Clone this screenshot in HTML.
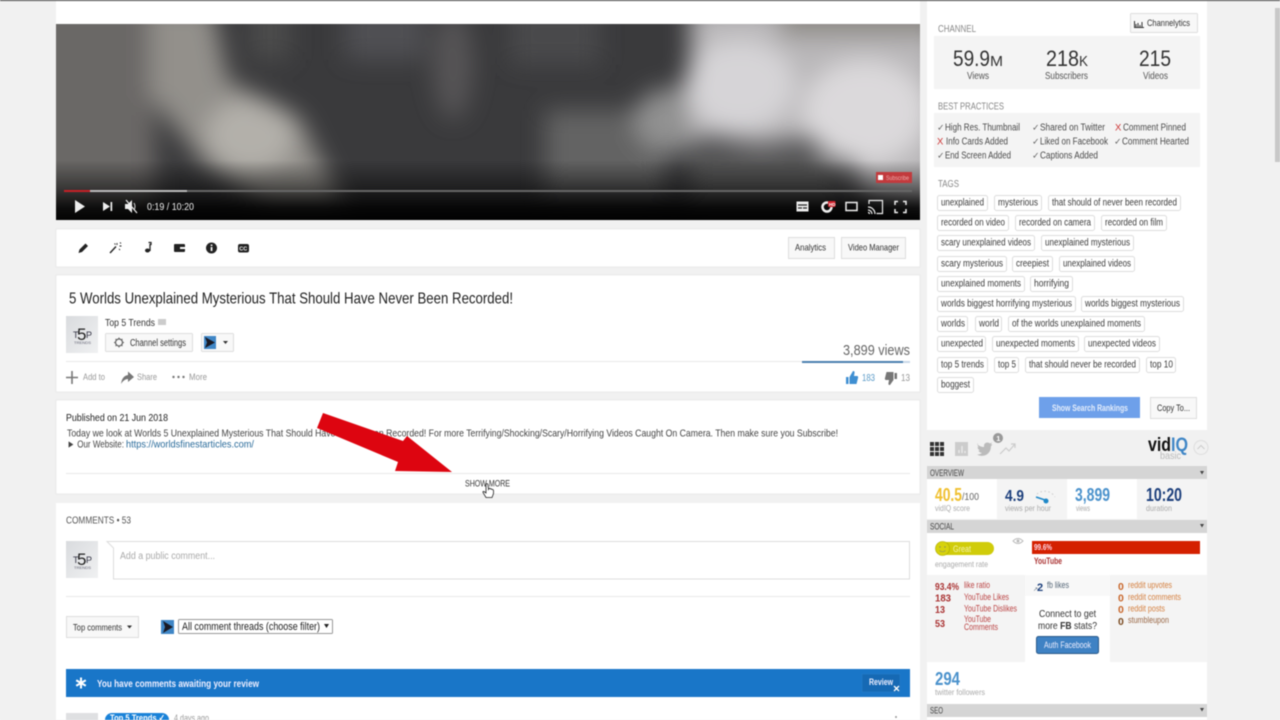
<!DOCTYPE html>
<html><head><meta charset="utf-8"><title>Video</title>
<style>
html,body{margin:0;padding:0;width:1280px;height:720px;overflow:hidden;background:#f1f1f1}
svg{display:block;font-family:"Liberation Sans",sans-serif;filter:blur(.4px)}
.g{fill:#888;font-size:10px}
.tag rect{fill:#fff;stroke:#ddd}
.tag text{font-size:10px;fill:#3c3c3c;transform:translateY(-.6px)}
.bp{font-size:10px;fill:#4a4a4a}
.ck{font-size:9px;fill:#666}
.x{font-size:9.500px;fill:#c33}
.lab{font-size:8.500px;fill:#aaa}
.hd{font-size:9px;fill:#444}
.r{font-size:9px;fill:#b44}
.rn{font-size:10.500px;fill:#a33;font-weight:bold}
.o{font-size:9px;fill:#d58040}
.on{font-size:10.500px;fill:#c8662a;font-weight:bold}
.btn{fill:#f8f8f8;stroke:#ddd}
</style></head><body>
<svg width="1280" height="720" viewBox="0 0 1280 720" xmlns="http://www.w3.org/2000/svg">
<defs>
<clipPath id="vc"><rect x="56" y="24" width="864" height="196"/></clipPath>
<filter id="bl" x="-30%" y="-30%" width="160%" height="160%"><feGaussianBlur stdDeviation="12"/></filter>
<linearGradient id="vg" x1="0" y1="0" x2="0" y2="1"><stop offset="0" stop-color="#000" stop-opacity="0"/><stop offset=".5" stop-color="#000" stop-opacity=".5"/><stop offset=".8" stop-color="#000" stop-opacity=".88"/><stop offset="1" stop-color="#000" stop-opacity=".97"/></linearGradient>
<linearGradient id="av" x1="0" y1="0" x2="1" y2="1"><stop offset="0" stop-color="#d9dbde"/><stop offset="1" stop-color="#f0f1f2"/></linearGradient>
</defs>
<rect width="1280" height="720" fill="#f1f1f1"/>
<rect width="1280" height="1" fill="#444"/>
<rect x="1275" y="8" width="5" height="154" fill="#c8c8c8"/>

<!-- left panels -->
<rect x="56" y="1" width="864" height="23" fill="#fff"/>
<rect x="56" y="229" width="864" height="38" fill="#fff" stroke="#e2e2e2" stroke-width=".6"/>
<rect x="56" y="275" width="864" height="117" fill="#fff" stroke="#e2e2e2" stroke-width=".6"/>
<rect x="56" y="400" width="864" height="94" fill="#fff" stroke="#e2e2e2" stroke-width=".6"/>
<rect x="56" y="503" width="864" height="217" fill="#fff"/>

<!-- video -->
<g clip-path="url(#vc)">
<rect x="56" y="24" width="864" height="196" fill="#3a3a3c"/>
<g filter="url(#bl)">
<rect x="20" y="0" width="135" height="230" fill="#6a6866"/>
<polygon points="150,5 212,5 228,80 300,118 345,210 270,210 205,165 150,95" fill="#93908b"/>
<ellipse cx="250" cy="135" rx="44" ry="36" fill="#b3b0aa"/>
<rect x="250" y="5" width="40" height="55" fill="#4b4b4c"/>
<rect x="345" y="5" width="80" height="55" fill="#505052"/>
<ellipse cx="453" cy="65" rx="20" ry="55" fill="#565557"/>
<rect x="510" y="5" width="90" height="60" fill="#4a4a4b"/>
<rect x="545" y="110" width="120" height="90" fill="#636363"/>
<ellipse cx="672" cy="120" rx="38" ry="32" fill="#919191"/>
<polygon points="690,5 940,5 945,215 862,200 845,135 760,145 690,135" fill="#b9b7b9"/>
<rect x="780" y="0" width="160" height="36" fill="#8d8a85"/>
<ellipse cx="740" cy="85" rx="55" ry="45" fill="#d6d4d7"/>
<ellipse cx="865" cy="112" rx="62" ry="52" fill="#dbd9db"/>
<rect x="690" y="155" width="150" height="60" fill="#5a5a5a"/>
</g>
<rect x="56" y="160" width="864" height="60" fill="url(#vg)"/>
</g>
<rect x="64" y="190" width="848" height="2" fill="#666"/>
<rect x="64" y="190" width="123" height="2" fill="#bbb"/>
<rect x="64" y="190" width="26" height="2" fill="#c62026"/>
<path d="M75 200 L85 206.500 L75 213Z" fill="#eee"/>
<path d="M103 202 L110 206.500 L103 211Z M110.500 202 h1.700 v9 h-1.700Z" fill="#eee"/>
<path d="M125 204 h3 l4 -4 v13 l-4 -4 h-3Z" fill="#eee"/>
<path d="M126 200 L137 213" stroke="#eee" stroke-width="1.200"/>
<path d="M134 203 q2 3.500 0 7" stroke="#ddd" fill="none"/>
<text x="147" y="210" font-size="10.500" fill="#eee" textLength="47" lengthAdjust="spacingAndGlyphs">0:19 / 10:20</text>
<rect x="876" y="172" width="36" height="11" fill="#c23a3d"/>
<rect x="878" y="175" width="5" height="5" fill="#fff"/>
<text x="886" y="180" font-size="6" fill="#eaa" textLength="23" lengthAdjust="spacingAndGlyphs">Subscribe</text>
<rect x="796.500" y="201.500" width="12" height="10" fill="#eee"/>
<path d="M798 205 h9 M798 208 h4 M803 208 h4" stroke="#222" stroke-width="1.300"/>
<circle cx="827" cy="207" r="4.500" fill="none" stroke="#eee" stroke-width="2.500"/>
<rect x="828" y="201" width="7.500" height="6" rx="1" fill="#d0202a"/>
<text x="829" y="206" font-size="4.500" fill="#fff" font-weight="bold">HD</text>
<rect x="846" y="202.500" width="11" height="8" fill="none" stroke="#eee" stroke-width="1.500"/>
<path d="M869 204 v-3.500 h13.500 v13 h-6" fill="none" stroke="#eee" stroke-width="1.200"/>
<path d="M868 207 a7 7 0 0 1 7 7 M868 210 a4 4 0 0 1 4 4 M868 212.500 a1.500 1.500 0 0 1 1.500 1.500" fill="none" stroke="#eee" stroke-width="1.200"/>
<path d="M895 205 v-3.500 h3 M903 201.500 h3 v3.500 M906 209 v3.500 h-3 M898 212.500 h-3 v-3.500" fill="none" stroke="#eee" stroke-width="1.500"/>

<!-- toolbar -->
<path d="M78.500 253 L79.500 249.500 L85.500 243.500 L88 246 L82 252Z" fill="#222"/>
<path d="M110 253 L116 246.500" stroke="#222" stroke-width="1.400"/>
<path d="M117 243 v2 M119.500 246 h2 M114.500 243.500 l1 1 M119 249 l1 1 M120 242.500 l1 1" stroke="#222" stroke-width=".9"/>
<path d="M148.500 242.500 h2.500 v2 h-1 v6.500" fill="none" stroke="#222" stroke-width="1.300"/>
<ellipse cx="147.500" cy="250.500" rx="2.500" ry="2" fill="#222"/>
<rect x="174" y="244" width="11" height="8" rx="1" fill="#222"/>
<rect x="180" y="247" width="5" height="2" fill="#fff"/>
<circle cx="211.500" cy="248" r="5.500" fill="#222"/>
<rect x="210.700" y="247" width="1.700" height="4" fill="#fff"/><rect x="210.700" y="244.500" width="1.700" height="1.500" fill="#fff"/>
<rect x="238" y="244" width="11" height="8.500" rx="2" fill="#222"/>
<text x="239.300" y="250.700" font-size="5.500" font-weight="bold" fill="#fff">CC</text>
<rect class="btn" x="788.500" y="237.500" width="46" height="21"/>
<text x="795" y="250.500" font-size="9.500" fill="#333" textLength="31" lengthAdjust="spacingAndGlyphs">Analytics</text>
<rect class="btn" x="841.500" y="237.500" width="64" height="21"/>
<text x="848" y="250.500" font-size="9.500" fill="#333" textLength="51" lengthAdjust="spacingAndGlyphs">Video Manager</text>

<!-- title block -->
<text x="69" y="303.500" font-size="16px" fill="#222" textLength="444" lengthAdjust="spacingAndGlyphs">5 Worlds Unexplained Mysterious That Should Have Never Been Recorded!</text>
<rect x="66" y="316" width="32" height="37" fill="url(#av)"/>
<text x="73" y="338" font-size="9" fill="#334">T</text><text x="77" y="340" font-size="17" fill="#222">5</text><text x="86" y="338" font-size="9" fill="#334">P</text>
<text x="74" y="344" font-size="4" fill="#667" textLength="17" lengthAdjust="spacingAndGlyphs">TRENDS</text>
<text x="105" y="326" font-size="10.500" fill="#333" textLength="50" lengthAdjust="spacingAndGlyphs">Top 5 Trends</text>
<rect x="158" y="319" width="8" height="6" fill="#ccc"/>
<rect class="btn" x="105.500" y="333.500" width="87" height="18" rx="1"/>
<circle cx="119" cy="342.500" r="3.500" fill="none" stroke="#666" stroke-width="1.300"/>
<path d="M119 337.500 v2 M119 345.500 v2 M114 342.500 h2 M122 342.500 h2 M115.500 339 l1.200 1.200 M121.300 344.800 l1.200 1.200 M122.500 339 l-1.200 1.200 M116.700 344.800 l-1.200 1.200" stroke="#666"/>
<text x="130" y="346" font-size="10" fill="#333" textLength="56" lengthAdjust="spacingAndGlyphs">Channel settings</text>
<rect class="btn" x="201.500" y="333.500" width="32" height="18" rx="1"/>
<rect x="204" y="336" width="12" height="13" fill="#3f86c6"/>
<path d="M205 337 L215 342.500 L205 348 L207 342.500Z" fill="#1a1a24"/>
<path d="M223 341 h5 l-2.500 3Z" fill="#333"/>
<rect x="66" y="361" width="844" height="1" fill="#e8e8e8"/>
<path d="M72 371 v13 M66 377.500 h12" stroke="#777" stroke-width="1.600"/>
<text x="83" y="380" font-size="9" fill="#999" textLength="22" lengthAdjust="spacingAndGlyphs">Add to</text>
<path d="M121 384 Q122 376 128 375 V371.500 L134 377 L128 382 V379 Q124 379 121 384Z" fill="#777"/>
<text x="137" y="380" font-size="9" fill="#999" textLength="20" lengthAdjust="spacingAndGlyphs">Share</text>
<circle cx="173.500" cy="377" r="1.200" fill="#777"/><circle cx="178.500" cy="377" r="1.200" fill="#777"/><circle cx="183.500" cy="377" r="1.200" fill="#777"/>
<text x="189" y="380" font-size="9" fill="#999" textLength="18" lengthAdjust="spacingAndGlyphs">More</text>
<text x="843" y="355" font-size="15px" fill="#666" textLength="67" lengthAdjust="spacingAndGlyphs">3,899 views</text>
<rect x="802" y="361" width="101" height="2" fill="#4a7fb0"/>
<rect x="903" y="361" width="7" height="2" fill="#c8d8e8"/>
<path d="M846 377 h2.500 v7 h-2.500Z M849.500 377 L853 371 q2 0 1.500 2 L854 376 h3.500 q1 1 .5 2 L856.500 384 h-7Z" fill="#3f8fd2"/>
<text x="862" y="381" font-size="10" fill="#5b9bc8" textLength="13" lengthAdjust="spacingAndGlyphs">183</text>
<path d="M894.500 373 h2.500 v6 h-2.500Z M893.500 380 L890 385 q-2 0 -1.500 -2 L889 380 h-3.500 q-1 -1 -.5 -2 L886.500 372 h7Z" fill="#777"/>
<text x="901" y="381" font-size="10" fill="#999" textLength="9" lengthAdjust="spacingAndGlyphs">13</text>

<!-- description -->
<text x="66" y="421" font-size="10.500" fill="#222" textLength="102" lengthAdjust="spacingAndGlyphs">Published on 21 Jun 2018</text>
<text x="67" y="436.500" font-size="10.500" fill="#444" textLength="771" lengthAdjust="spacingAndGlyphs">Today we look at Worlds 5 Unexplained Mysterious That Should Have Never Been Recorded! For more Terrifying/Shocking/Scary/Horrifying Videos Caught On Camera. Then make sure you Subscribe!</text>
<text x="67" y="447.500" font-size="10.500" fill="#444" textLength="57" lengthAdjust="spacingAndGlyphs">► Our Website:</text>
<text x="126" y="447.500" font-size="10.500" fill="#2b6c9b" textLength="128" lengthAdjust="spacingAndGlyphs">https://worldsfinestarticles.com/</text>
<rect x="66" y="473" width="844" height="1" fill="#e8e8e8"/>
<text x="465" y="486.500" font-size="9.500" fill="#333" textLength="45" lengthAdjust="spacingAndGlyphs">SHOW MORE</text>

<!-- comments -->
<text x="66" y="523.500" font-size="10" fill="#555" textLength="65" lengthAdjust="spacingAndGlyphs">COMMENTS • 53</text>
<rect x="66" y="541" width="32" height="37" fill="url(#av)"/>
<text x="73" y="563" font-size="9" fill="#334">T</text><text x="77" y="565" font-size="17" fill="#222">5</text><text x="86" y="563" font-size="9" fill="#334">P</text>
<text x="74" y="569" font-size="4" fill="#667" textLength="17" lengthAdjust="spacingAndGlyphs">TRENDS</text>
<path d="M107 541.500 H909.500 V579 H113.500 V548Z" fill="#fff" stroke="#ddd"/>
<text x="120" y="559" font-size="10" fill="#aaa" textLength="95" lengthAdjust="spacingAndGlyphs">Add a public comment...</text>
<rect x="66" y="596" width="844" height="1" fill="#e8e8e8"/>
<rect class="btn" x="66.500" y="616.500" width="72" height="21"/>
<text x="73" y="630.500" font-size="9.500" fill="#333" textLength="49" lengthAdjust="spacingAndGlyphs">Top comments</text>
<path d="M127 625.500 h5 l-2.500 3Z" fill="#333"/>
<rect x="161" y="620" width="13" height="14" fill="#3f86c6"/>
<path d="M163 621 L173 627 L163 633 L165 627Z" fill="#1a1a24"/>
<rect x="178.500" y="619.500" width="154" height="14" rx="1" fill="#fff" stroke="#999"/>
<text x="182" y="630" font-size="11" fill="#222" textLength="138" lengthAdjust="spacingAndGlyphs">All comment threads (choose filter)</text>
<path d="M324 624 h5 l-2.500 4Z" fill="#222"/>
<rect x="66" y="669" width="844" height="28" fill="#1976c8"/>
<path d="M81 677.500 v11 M76.200 680.200 L85.800 685.800 M85.800 680.200 L76.200 685.800" stroke="#fff" stroke-width="2"/>
<text x="97" y="687" font-size="10" font-weight="bold" fill="#eef" textLength="162" lengthAdjust="spacingAndGlyphs">You have comments awaiting your review</text>
<rect x="862" y="674" width="38" height="18" fill="#1669b4" stroke="#2a7fca" stroke-width=".5"/>
<text x="869" y="685" font-size="9.500" font-weight="bold" fill="#eef" textLength="24" lengthAdjust="spacingAndGlyphs">Review</text>
<path d="M894 686 L899 691 M899 686 L894 691" stroke="#fff" stroke-width="1.300"/>
<rect x="66" y="713" width="32" height="7" fill="#dfe0e2"/>
<rect x="105" y="713" width="64" height="14" rx="7" fill="#1a82d8"/>
<text x="110" y="721" font-size="9.500" fill="#fff" font-weight="bold" textLength="55" lengthAdjust="spacingAndGlyphs">Top 5 Trends ✓</text>
<text x="174" y="721" font-size="9.500" fill="#999" textLength="35" lengthAdjust="spacingAndGlyphs">4 days ago</text>
<circle cx="896" cy="717" r="1" fill="#999"/>

<!-- sidebar top -->
<rect x="927" y="1" width="280" height="429" fill="#fff"/>
<text x="938" y="32" class="g" textLength="38" lengthAdjust="spacingAndGlyphs">CHANNEL</text>
<rect class="btn" x="1130.500" y="13.500" width="67" height="19" rx="1"/>
<path d="M1134.500 21 v6.500 h9.500 M1136 27 v-3 M1138 27 v-4 M1140 27 v-2 M1142 27 v-5" stroke="#333" fill="none"/>
<text x="1147" y="26" font-size="9.500" fill="#333" textLength="43" lengthAdjust="spacingAndGlyphs">Channelytics</text>
<rect x="934" y="36" width="266" height="53" fill="#f4f4f4"/>
<text x="953" y="66" font-size="22px" fill="#333" textLength="37" lengthAdjust="spacingAndGlyphs">59.9</text>
<text x="990" y="66" font-size="15px" fill="#333" textLength="13" lengthAdjust="spacingAndGlyphs">M</text>
<text x="1046" y="66" font-size="22px" fill="#333" textLength="33" lengthAdjust="spacingAndGlyphs">218</text>
<text x="1079" y="66" font-size="15px" fill="#333" textLength="9" lengthAdjust="spacingAndGlyphs">K</text>
<text x="1139" y="66" font-size="22px" fill="#333" textLength="32" lengthAdjust="spacingAndGlyphs">215</text>
<text x="967" y="79" font-size="10" fill="#555" textLength="22" lengthAdjust="spacingAndGlyphs">Views</text>
<text x="1045" y="79" font-size="10" fill="#555" textLength="43" lengthAdjust="spacingAndGlyphs">Subscribers</text>
<text x="1143" y="79" font-size="10" fill="#555" textLength="25" lengthAdjust="spacingAndGlyphs">Videos</text>
<text x="938" y="109.500" class="g" textLength="66" lengthAdjust="spacingAndGlyphs">BEST PRACTICES</text>
<rect x="934" y="113" width="266" height="54" fill="#f4f4f4"/>
<text x="937" y="130.500" class="ck">✓</text><text x="945" y="130.500" class="bp" textLength="75" lengthAdjust="spacingAndGlyphs">High Res. Thumbnail</text>
<text x="1032" y="130.500" class="ck">✓</text><text x="1040" y="130.500" class="bp" textLength="65" lengthAdjust="spacingAndGlyphs">Shared on Twitter</text>
<text x="1115" y="130.500" class="x">X</text><text x="1123" y="130.500" class="bp" textLength="63" lengthAdjust="spacingAndGlyphs">Comment Pinned</text>
<text x="937" y="144.500" class="x">X</text><text x="946" y="144.500" class="bp" textLength="62" lengthAdjust="spacingAndGlyphs">Info Cards Added</text>
<text x="1032" y="144.500" class="ck">✓</text><text x="1040" y="144.500" class="bp" textLength="68" lengthAdjust="spacingAndGlyphs">Liked on Facebook</text>
<text x="1114" y="144.500" class="ck">✓</text><text x="1122" y="144.500" class="bp" textLength="67" lengthAdjust="spacingAndGlyphs">Comment Hearted</text>
<text x="937" y="158.500" class="ck">✓</text><text x="945" y="158.500" class="bp" textLength="66" lengthAdjust="spacingAndGlyphs">End Screen Added</text>
<text x="1032" y="158.500" class="ck">✓</text><text x="1040" y="158.500" class="bp" textLength="58" lengthAdjust="spacingAndGlyphs">Captions Added</text>
<text x="938" y="187" class="g" textLength="21" lengthAdjust="spacingAndGlyphs">TAGS</text>

<!-- tags -->
<g class="tag">
<rect x="937.500" y="195.500" width="50" height="15" rx="2"/><text x="941" y="206" textLength="43" lengthAdjust="spacingAndGlyphs">unexplained</text>
<rect x="994.500" y="195.500" width="47" height="15" rx="2"/><text x="998" y="206" textLength="40" lengthAdjust="spacingAndGlyphs">mysterious</text>
<rect x="1048.500" y="195.500" width="132" height="15" rx="2"/><text x="1052" y="206" textLength="125" lengthAdjust="spacingAndGlyphs">that should of never been recorded</text>
<rect x="937.500" y="215.500" width="71" height="15" rx="2"/><text x="941" y="226" textLength="64" lengthAdjust="spacingAndGlyphs">recorded on video</text>
<rect x="1015.500" y="215.500" width="79" height="15" rx="2"/><text x="1019" y="226" textLength="72" lengthAdjust="spacingAndGlyphs">recorded on camera</text>
<rect x="1101.500" y="215.500" width="65" height="15" rx="2"/><text x="1105" y="226" textLength="58" lengthAdjust="spacingAndGlyphs">recorded on film</text>
<rect x="937.500" y="235.500" width="97" height="15" rx="2"/><text x="941" y="246" textLength="90" lengthAdjust="spacingAndGlyphs">scary unexplained videos</text>
<rect x="1041.500" y="235.500" width="92" height="15" rx="2"/><text x="1045" y="246" textLength="85" lengthAdjust="spacingAndGlyphs">unexplained mysterious</text>
<rect x="937.500" y="256.500" width="69" height="15" rx="2"/><text x="941" y="267" textLength="62" lengthAdjust="spacingAndGlyphs">scary mysterious</text>
<rect x="1012.500" y="256.500" width="40" height="15" rx="2"/><text x="1016" y="267" textLength="33" lengthAdjust="spacingAndGlyphs">creepiest</text>
<rect x="1059.500" y="256.500" width="75" height="15" rx="2"/><text x="1063" y="267" textLength="68" lengthAdjust="spacingAndGlyphs">unexplained videos</text>
<rect x="937.500" y="276.500" width="87" height="15" rx="2"/><text x="941" y="287" textLength="80" lengthAdjust="spacingAndGlyphs">unexplained moments</text>
<rect x="1030.500" y="276.500" width="42" height="15" rx="2"/><text x="1034" y="287" textLength="35" lengthAdjust="spacingAndGlyphs">horrifying</text>
<rect x="937.500" y="296.500" width="138" height="15" rx="2"/><text x="941" y="307" textLength="131" lengthAdjust="spacingAndGlyphs">worlds biggest horrifying mysterious</text>
<rect x="1081.500" y="296.500" width="102" height="15" rx="2"/><text x="1085" y="307" textLength="95" lengthAdjust="spacingAndGlyphs">worlds biggest mysterious</text>
<rect x="937.500" y="316.500" width="30" height="15" rx="2"/><text x="941" y="327" textLength="24" lengthAdjust="spacingAndGlyphs">worlds</text>
<rect x="975.500" y="316.500" width="26" height="15" rx="2"/><text x="979" y="327" textLength="20" lengthAdjust="spacingAndGlyphs">world</text>
<rect x="1008.500" y="316.500" width="136" height="15" rx="2"/><text x="1012" y="327" textLength="129" lengthAdjust="spacingAndGlyphs">of the worlds unexplained moments</text>
<rect x="937.500" y="336.500" width="48" height="15" rx="2"/><text x="941" y="347" textLength="42" lengthAdjust="spacingAndGlyphs">unexpected</text>
<rect x="992.500" y="336.500" width="86" height="15" rx="2"/><text x="996" y="347" textLength="79" lengthAdjust="spacingAndGlyphs">unexpected moments</text>
<rect x="1084.500" y="336.500" width="75" height="15" rx="2"/><text x="1088" y="347" textLength="68" lengthAdjust="spacingAndGlyphs">unexpected videos</text>
<rect x="937.500" y="357.500" width="50" height="15" rx="2"/><text x="941" y="368" textLength="43" lengthAdjust="spacingAndGlyphs">top 5 trends</text>
<rect x="994.500" y="357.500" width="24" height="15" rx="2"/><text x="998" y="368" textLength="18" lengthAdjust="spacingAndGlyphs">top 5</text>
<rect x="1025.500" y="357.500" width="114" height="15" rx="2"/><text x="1029" y="368" textLength="107" lengthAdjust="spacingAndGlyphs">that should never be recorded</text>
<rect x="1146.500" y="357.500" width="29" height="15" rx="2"/><text x="1150" y="368" textLength="23" lengthAdjust="spacingAndGlyphs">top 10</text>
<rect x="937.500" y="377.500" width="36" height="15" rx="2"/><text x="941" y="388" textLength="29" lengthAdjust="spacingAndGlyphs">boggest</text>
</g>
<rect x="1039" y="397" width="101" height="21" fill="#6ea0ea"/>
<text x="1052" y="411" font-size="9" font-weight="bold" fill="#e4edfb" textLength="76" lengthAdjust="spacingAndGlyphs">Show Search Rankings</text>
<rect class="btn" x="1150.500" y="397.500" width="46" height="21"/>
<text x="1157" y="411" font-size="9.500" fill="#333" textLength="33" lengthAdjust="spacingAndGlyphs">Copy To...</text>

<!-- vidIQ header -->
<g fill="#333">
<rect x="930" y="442" width="4" height="4"/><rect x="935" y="442" width="4" height="4"/><rect x="940" y="442" width="4" height="4"/>
<rect x="930" y="447" width="4" height="4"/><rect x="935" y="447" width="4" height="4"/><rect x="940" y="447" width="4" height="4"/>
<rect x="930" y="452" width="4" height="4"/><rect x="935" y="452" width="4" height="4"/><rect x="940" y="452" width="4" height="4"/>
</g>
<rect x="955" y="442" width="13" height="14" fill="#ccc"/>
<path d="M959 453 v-3 M962 453 v-7 M965 453 v-2" stroke="#eee" stroke-width="1.200"/>
<path d="M977 444 q3 3 7 3 q-.5 -4 3 -4.500 q2 0 3 1 l2 -1 l-1 2 l1.500 0 l-1.500 1.500 q0 6 -5 9 q-5 2 -9 -.5 q3 0 5 -1.500 q-3 -.5 -3.500 -2.500 h1.500 q-2.500 -1.500 -2.500 -3.500 l1.500 .5 q-2 -1.500 -1 -4Z" fill="#bbb"/>
<circle cx="998" cy="438" r="5" fill="#999"/>
<text x="996.300" y="441" font-size="7.500" fill="#fff" font-weight="bold">1</text>
<path d="M1000 454 L1006 448 L1009 451 L1015 444 M1011 444 h4 v4" fill="none" stroke="#ccc" stroke-width="1.200"/>
<text x="1148" y="451" font-size="19px" font-weight="bold" fill="#111" textLength="23" lengthAdjust="spacingAndGlyphs">vid</text>
<text x="1171" y="451" font-size="19px" font-weight="bold" fill="#3f86c6" textLength="17" lengthAdjust="spacingAndGlyphs">IQ</text>
<text x="1160" y="459" font-size="10" fill="#bbb" textLength="21" lengthAdjust="spacingAndGlyphs">basic</text>
<circle cx="1201" cy="447.500" r="7" fill="none" stroke="#ddd"/>
<path d="M1197.500 449 L1201 445.500 L1204.500 449" fill="none" stroke="#ccc"/>

<!-- overview -->
<rect x="927" y="466" width="280" height="13" fill="#d5d5d5"/>
<text x="930" y="476" class="hd" textLength="34" lengthAdjust="spacingAndGlyphs">OVERVIEW</text>
<path d="M1200 471 h4 l-2 3.500Z" fill="#444"/>
<rect x="927" y="479" width="70" height="40" fill="#fff"/>
<rect x="997" y="479" width="70" height="40" fill="#f4f4f4"/>
<rect x="1067" y="479" width="70" height="40" fill="#fff"/>
<rect x="1137" y="479" width="70" height="40" fill="#f4f4f4"/>
<text x="935" y="501" font-size="18px" font-weight="bold" fill="#f0c030" textLength="27" lengthAdjust="spacingAndGlyphs">40.5</text>
<text x="962" y="500" font-size="10" fill="#666" textLength="17" lengthAdjust="spacingAndGlyphs">/100</text>
<text x="935" y="511" class="lab" textLength="35" lengthAdjust="spacingAndGlyphs">vidIQ score</text>
<text x="1005" y="501" font-size="16px" font-weight="bold" fill="#1c3f7c" textLength="19" lengthAdjust="spacingAndGlyphs">4.9</text>
<text x="1005" y="511" class="lab" textLength="46" lengthAdjust="spacingAndGlyphs">views per hour</text>
<path d="M1037 494 A12 12 0 0 1 1055 497" fill="none" stroke="#ccc" stroke-dasharray="1.500 2.500"/>
<path d="M1036 497 L1045 500" stroke="#1f88c8" stroke-width="1.500"/>
<circle cx="1046" cy="501" r="2.500" fill="#1f88c8"/>
<text x="1075" y="501" font-size="18px" font-weight="bold" fill="#4b92cc" textLength="35" lengthAdjust="spacingAndGlyphs">3,899</text>
<text x="1076" y="511" class="lab" textLength="14" lengthAdjust="spacingAndGlyphs">views</text>
<text x="1146" y="501" font-size="18px" font-weight="bold" fill="#1c3f7c" textLength="36" lengthAdjust="spacingAndGlyphs">10:20</text>
<text x="1146" y="511" class="lab" textLength="26" lengthAdjust="spacingAndGlyphs">duration</text>

<!-- social -->
<rect x="927" y="520" width="280" height="13" fill="#d5d5d5"/>
<text x="930" y="529.500" class="hd" textLength="24" lengthAdjust="spacingAndGlyphs">SOCIAL</text>
<path d="M1200 524 h4 l-2 3.500Z" fill="#444"/>
<rect x="927" y="533" width="280" height="42" fill="#fff"/>
<rect x="936" y="542" width="58" height="13" rx="6.500" fill="#d0cc0a"/>
<circle cx="942.500" cy="548.500" r="7" fill="#d6d20c" stroke="#aaa800" stroke-width=".6"/>
<circle cx="940" cy="547" r=".7" fill="#886"/><circle cx="945" cy="547" r=".7" fill="#886"/>
<path d="M939.500 550.500 q3 2.500 6 0" stroke="#886" fill="none" stroke-width=".6"/>
<text x="953" y="552" font-size="9" fill="#f4f4b0" textLength="18" lengthAdjust="spacingAndGlyphs">Great</text>
<path d="M1013 541 q5 -5 10 0 q-5 5 -10 0Z" fill="none" stroke="#bbb"/><circle cx="1018" cy="541" r="1.500" fill="#bbb"/>
<text x="935" y="567" class="lab" textLength="53" lengthAdjust="spacingAndGlyphs">engagement rate</text>
<rect x="1032" y="541" width="168" height="13" fill="#d42000"/>
<text x="1034" y="550" font-size="8" font-weight="bold" fill="#fde" textLength="18" lengthAdjust="spacingAndGlyphs">99.6%</text>
<text x="1034" y="564" font-size="9" font-weight="bold" fill="#a33" textLength="28" lengthAdjust="spacingAndGlyphs">YouTube</text>
<rect x="927" y="575" width="98" height="87" fill="#f4f4f4"/>
<rect x="1025" y="575" width="85" height="87" fill="#fff"/>
<rect x="1110" y="575" width="97" height="87" fill="#f4f4f4"/>
<rect x="1025" y="575" width="85" height="21" fill="#f8f8f8"/>
<text x="935" y="590" class="rn" textLength="24" lengthAdjust="spacingAndGlyphs">93.4%</text>
<text x="964" y="588" class="r" textLength="26" lengthAdjust="spacingAndGlyphs">like ratio</text>
<text x="935" y="601.500" class="rn" textLength="16" lengthAdjust="spacingAndGlyphs">183</text>
<text x="964" y="600" class="r" textLength="45" lengthAdjust="spacingAndGlyphs">YouTube Likes</text>
<text x="935" y="613" class="rn" textLength="10" lengthAdjust="spacingAndGlyphs">13</text>
<text x="964" y="611.500" class="r" textLength="53" lengthAdjust="spacingAndGlyphs">YouTube Dislikes</text>
<text x="935" y="627" class="rn" textLength="10" lengthAdjust="spacingAndGlyphs">53</text>
<text x="964" y="622" class="r" textLength="27" lengthAdjust="spacingAndGlyphs">YouTube</text>
<text x="964" y="630" class="r" textLength="34" lengthAdjust="spacingAndGlyphs">Comments</text>
<text x="1033" y="591" font-size="6" fill="#678">&#8599;</text>
<text x="1037" y="591" font-size="11px" font-weight="bold" fill="#1c3f7c">2</text>
<text x="1047" y="588" font-size="9" fill="#567" textLength="22" lengthAdjust="spacingAndGlyphs">fb likes</text>
<text x="1039" y="617" font-size="10.500" fill="#333" textLength="57" lengthAdjust="spacingAndGlyphs">Connect to get</text>
<text x="1038" y="629" font-size="10.500" fill="#333" textLength="59" lengthAdjust="spacingAndGlyphs">more <tspan font-weight="bold">FB</tspan> stats?</text>
<rect x="1036.500" y="636.500" width="62" height="17" rx="2" fill="#3f82c4" stroke="#2a5a8a"/>
<text x="1044" y="648" font-size="9" fill="#eef" textLength="47" lengthAdjust="spacingAndGlyphs">Auth Facebook</text>
<text x="1118" y="590" class="on">0</text><text x="1128" y="588" class="o" textLength="44" lengthAdjust="spacingAndGlyphs">reddit upvotes</text>
<text x="1118" y="601.500" class="on">0</text><text x="1128" y="600" class="o" textLength="53" lengthAdjust="spacingAndGlyphs">reddit comments</text>
<text x="1118" y="613" class="on">0</text><text x="1128" y="611.500" class="o" textLength="37" lengthAdjust="spacingAndGlyphs">reddit posts</text>
<text x="1118" y="625" class="on" style="fill:#7a4a20">0</text><text x="1128" y="623" class="o" style="fill:#996644" textLength="41" lengthAdjust="spacingAndGlyphs">stumbleupon</text>
<rect x="927" y="662" width="280" height="42" fill="#fff"/>
<text x="935" y="685" font-size="18px" font-weight="bold" fill="#4b92cc" textLength="25" lengthAdjust="spacingAndGlyphs">294</text>
<text x="935" y="695" class="lab" textLength="50" lengthAdjust="spacingAndGlyphs">twitter followers</text>
<rect x="927" y="704" width="280" height="13" fill="#d5d5d5"/>
<text x="930" y="713.500" class="hd" textLength="13" lengthAdjust="spacingAndGlyphs">SEO</text>
<path d="M1200 708 h4 l-2 3.500Z" fill="#444"/>
<rect x="927" y="717" width="280" height="3" fill="#fff"/>

<!-- overlay arrow + cursor -->
<polygon points="323,413 403,441 407,436 452,472 395,471 398,462 317,428" fill="#dd0510"/>
<path d="M486 484 q1.500 -1 2 .5 l.5 5 l.5 -1 q1 -.5 1.500 .5 q1 -.5 1.500 .5 q1.200 -.3 1.500 1 v3 l-1.500 4 h-6 l-3 -5 q-.5 -1.500 1 -1 l2 1.500Z" fill="#fff" stroke="#222" stroke-width=".8"/>
</svg>
</body></html>
